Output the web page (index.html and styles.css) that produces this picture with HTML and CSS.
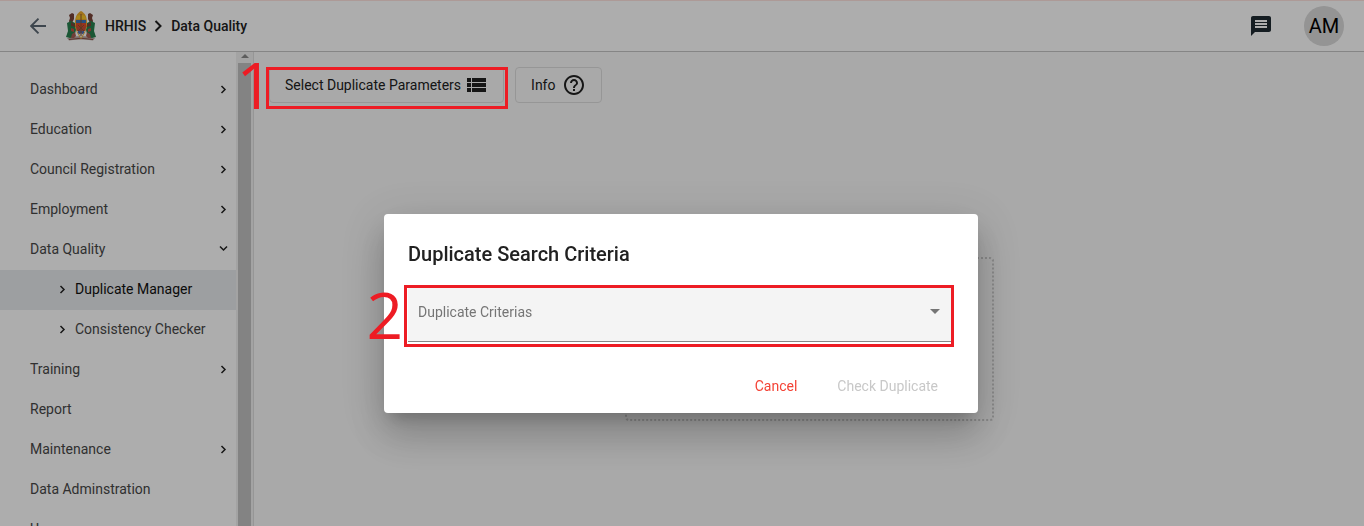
FILE: index.html
```html
<!DOCTYPE html>
<html lang="en">
<head>
<meta charset="utf-8">
<title>HRHIS - Data Quality</title>
<meta name="viewport" content="width=device-width, initial-scale=1">
<link rel="stylesheet" href="styles.css">
</head>
<body>
<svg class="sprite" aria-hidden="true">
  <symbol id="chevron" viewBox="0 0 10 10"><path d="M2.500 2l3.500 3.500L2.500 9" fill="none" stroke="currentColor" stroke-width="1.500"/></symbol>
</svg>
<div class="app">
  <header class="topbar">
    <button class="icon-button back" aria-label="Back">
      <svg width="16" height="16" viewBox="0 0 16 16"><path d="M16 8H1.500M8.500 .7L1.200 8l7.300 7.300" fill="none" stroke="currentColor" stroke-width="1.900"/></svg>
    </button>
    <svg class="emblem" width="30" height="30" viewBox="0 0 30 30" aria-hidden="true">
      <path d="M1 27q14-4 28 0l-2 2.500q-12-2-24 0z" fill="#b9a6a0"/>
      <path d="M3 28.500q12-2.500 24 0" fill="none" stroke="#8c5048" stroke-width="1"/>
      <path d="M3 4l3-2 2 1v5l-2 4-2 2-1-4 1-3z" fill="#7a4438"/>
      <path d="M27 4l-3-2-2 1v5l2 4 2 2 1-4-1-3z" fill="#7a4438"/>
      <path d="M1 12l4-2 4 2 1 7-2 7-4 1-4-1 2-6z" fill="#28804f"/>
      <path d="M29 12l-4-2-4 2-1 7 2 7 4 1 4-1-2-6z" fill="#28804f"/>
      <path d="M5 11l5 3v2l-5-1zM25 11l-5 3v2l5-1z" fill="#7a4438"/>
      <path d="M5 17l3 1v3l-3-1zM25 17l-3 1v3l3-1z" fill="#c34c42"/>
      <path d="M6 23l3-2 1 4-2 2H5zM24 23l-3-2-1 4 2 2h3z" fill="#a55e54"/>
      <path d="M15 0c4 2 6 6 6 12 0 7-3 12-6 16-3-4-6-9-6-16 0-6 2-10 6-12z" fill="#edab2a"/>
      <path d="M11 5q4-2 8 0l1 3H10z" fill="#fbc926"/>
      <path d="M10 9h10v3H10z" fill="#3975b9"/>
      <path d="M10 12h10v4H10z" fill="#dc4c2c"/>
      <path d="M10 16h10l-1 4h-8z" fill="#c74d38"/>
      <path d="M11 20h8l-4 7z" fill="#e4e4ec"/>
      <path d="M12 19q1.500 2 3 0 1.500 2 3 0v3q-1.500 2-3 0-1.500 2-3 0z" fill="#526eb0"/>
      <path d="M15 3v22M12 14l6 6M18 14l-6 6" stroke="#8d542e" stroke-width="1"/>
    </svg>
    <nav class="breadcrumb" aria-label="Breadcrumb">
      <a href="#">HRHIS</a>
      <svg width="9" height="12" viewBox="0 0 9 12"><path d="M1.500 1l5 5-5 5" fill="none" stroke="currentColor" stroke-width="2"/></svg>
      <a href="#">Data Quality</a>
    </nav>
    <button class="icon-button messages" aria-label="Messages">
      <svg width="24" height="24" viewBox="0 0 24 24"><path fill="currentColor" d="M20 2H4c-1.100 0-2 .9-2 2v18l4-4h14c1.100 0 2-.9 2-2V4c0-1.100-.9-2-2-2zm-2 12H6v-2h12v2zm0-3H6V9h12v2zm0-3H6V6h12v2z"/></svg>
    </button>
    <button class="avatar">AM</button>
  </header>
  <div class="body">
    <aside class="sidebar">
      <nav class="menu" aria-label="Main">
        <a href="#">Dashboard<svg class="chev"><use href="#chevron"/></svg></a>
        <a href="#">Education<svg class="chev"><use href="#chevron"/></svg></a>
        <a href="#">Council Registration<svg class="chev"><use href="#chevron"/></svg></a>
        <a href="#">Employment<svg class="chev"><use href="#chevron"/></svg></a>
        <a href="#">Data Quality<svg class="chev down"><use href="#chevron"/></svg></a>
        <a href="#" class="sub active"><svg class="chev"><use href="#chevron"/></svg>Duplicate Manager</a>
        <a href="#" class="sub"><svg class="chev"><use href="#chevron"/></svg>Consistency Checker</a>
        <a href="#">Training<svg class="chev"><use href="#chevron"/></svg></a>
        <a href="#">Report</a>
        <a href="#">Maintenance<svg class="chev"><use href="#chevron"/></svg></a>
        <a href="#">Data Adminstration</a>
        <a href="#">Users</a>
      </nav>
      <div class="scrollbar" aria-hidden="true">
        <svg width="8" height="4" viewBox="0 0 8 4"><path d="M0 4l4-4 4 4z" fill="currentColor"/></svg>
        <div class="thumb"></div>
      </div>
    </aside>
    <main class="content">
      <div class="toolbar">
        <div class="marked">
          <button class="outlined">Select Duplicate Parameters
            <svg width="19" height="14" viewBox="0 0 19 14"><path fill="currentColor" d="M0 0h4v4H0zM5 0h14v4H5zM0 5h4v4H0zM5 5h14v4H5zM0 10h4v4H0zM5 10h14v4H5z"/></svg>
          </button>
          <span class="mark mark-one"><span class="mark-number">1</span></span>
        </div>
        <button class="outlined info">Info
          <svg width="24" height="24" viewBox="0 0 24 24"><path fill="currentColor" d="M11 18h2v-2h-2v2zm1-16C6.480 2 2 6.480 2 12s4.480 10 10 10 10-4.480 10-10S17.520 2 12 2zm0 18c-4.410 0-8-3.590-8-8s3.590-8 8-8 8 3.590 8 8-3.590 8-8 8zm0-14c-2.210 0-4 1.790-4 4h2c0-1.100.9-2 2-2s2 .9 2 2c0 2-3 1.750-3 5h2c0-2.250 3-2.500 3-5 0-2.210-1.790-4-4-4z"/></svg>
        </button>
      </div>
      <div class="placeholder"></div>
    </main>
  </div>
</div>
<div class="backdrop">
  <form class="dialog" role="dialog" aria-labelledby="dialog-title">
    <h2 id="dialog-title">Duplicate Search Criteria</h2>
    <div class="field">
      <select aria-label="Duplicate Criterias"><option>Duplicate Criterias</option></select>
      <svg class="arrow" width="10" height="5" viewBox="0 0 10 5"><path d="M0 0h10L5 5z" fill="currentColor"/></svg>
      <span class="mark mark-two"><span class="mark-number">2</span></span>
    </div>
    <div class="actions">
      <button type="button" class="cancel">Cancel</button>
      <button type="button" disabled>Check Duplicate</button>
    </div>
  </form>
</div>
</body>
</html>
```
FILE: styles.css
```css
* { box-sizing: border-box; }

body {
  margin: 0;
  font: 14px/20px Roboto, "Liberation Sans", sans-serif;
  color: #212121;
}

button, select { font: inherit; color: inherit; }
button { border: 0; background: none; padding: 0; }
a { color: inherit; text-decoration: none; }
svg { flex: none; }
.sprite { position: absolute; width: 0; height: 0; }

.app {
  display: flex;
  flex-direction: column;
  height: 100vh;
  overflow: hidden;
}

.topbar {
  display: flex;
  align-items: center;
  flex: none;
  height: 52px;
  padding: 0 20px 0 30px;
  background: #fff;
  border-top: 1px solid #ffe4df;
  border-bottom: 1px solid #c4c4c4;
  box-shadow: 0 1px 2px #0003;
}
.icon-button { display: flex; }
.back { color: #5c6873; }
.emblem { margin-left: 20px; }
.breadcrumb {
  display: flex;
  align-items: center;
  gap: 8px;
  margin-left: 9px;
  font-weight: 500;
}
.messages { margin-left: auto; color: #202b33; }
.avatar {
  width: 40px;
  height: 40px;
  margin-left: 31px;
  border-radius: 50%;
  background: #dadada;
  color: #000;
  font-size: 20px;
}

.body { display: flex; flex: 1; min-height: 0; }
.sidebar {
  display: flex;
  flex: none;
  width: 254px;
  overflow: hidden;
  background: #fff;
  border-right: 1px solid #dedede;
}
.menu { flex: 1; padding-top: 18px; }
.menu a {
  display: flex;
  align-items: center;
  justify-content: space-between;
  height: 40px;
  padding: 0 7px 2px 30px;
  color: #484848;
}
.menu .sub { justify-content: flex-start; gap: 7px; padding-left: 58px; }
.menu .active { background: #e8eaed; color: #111; }
.chev { width: 10px; height: 10px; color: #222; }
.down { transform: rotate(90deg); }
.scrollbar {
  display: flex;
  flex-direction: column;
  align-items: center;
  width: 17px;
  padding-top: 2px;
  background: #f1f1f1;
  color: #8a8a8a;
}
.thumb { flex: 1; width: 13px; margin-top: 5px; background: #c1c1c1; }

.content { flex: 1; padding: 15px; background: #fafafa; }
.toolbar { display: flex; gap: 11px; }
.marked { position: relative; }
.outlined {
  display: flex;
  align-items: center;
  gap: 6px;
  height: 36px;
  padding: 0 17px 0 15px;
  border: 1px solid #dedede;
  border-radius: 4px;
}
.info { gap: 7px; padding-right: 15px; }
.placeholder {
  width: 369px;
  height: 164px;
  margin: 154px auto 0;
  border: 2px dotted #ccc;
  border-radius: 4px;
}

.backdrop {
  position: fixed;
  inset: 0;
  display: grid;
  place-items: center;
  padding: 100px 2px 0 0;
  background: #00000052;
}
.dialog {
  width: 594px;
  padding: 24px 24px 9px;
  border-radius: 4px;
  background: #fff;
  box-shadow: 0 11px 15px -7px #0003, 0 24px 38px 3px #00000024, 0 9px 46px 8px #0000001f;
}
h2 {
  margin: 0 0 16px;
  font-size: 20px;
  line-height: 32px;
  font-weight: 500;
}
.field { position: relative; display: flex; color: #757575; }
select {
  appearance: none;
  width: 100%;
  height: 56px;
  padding: 0 32px 3px 10px;
  border: 0;
  border-bottom: 1px solid #858585;
  border-radius: 4px 4px 0 0;
  background: #f4f4f4;
}
.arrow { position: absolute; right: 14px; top: 23px; pointer-events: none; }
.actions { display: flex; justify-content: flex-end; gap: 8px; margin-top: 26px; }
.actions button { height: 36px; padding: 0 16px; border-radius: 4px; }
.actions .cancel { color: #f44336; }
.actions button:disabled { color: #c8c8c8; }

.mark {
  position: absolute;
  z-index: 10;
  border: 3px solid #ed1c24;
  color: #ed1c24;
  pointer-events: none;
}
.mark-number {
  position: absolute;
  right: 100%;
  font: 64px/64px "Open Sans", "Noto Sans", sans-serif;
}
.mark-one { inset: 0 -4px -6px -3px; }
.mark-one .mark-number { top: -17px; margin-right: -4px; }
.mark-two { inset: -1px 0 -5px -4px; }
.mark-two .mark-number { top: -5px; margin-right: 4px; }
```
